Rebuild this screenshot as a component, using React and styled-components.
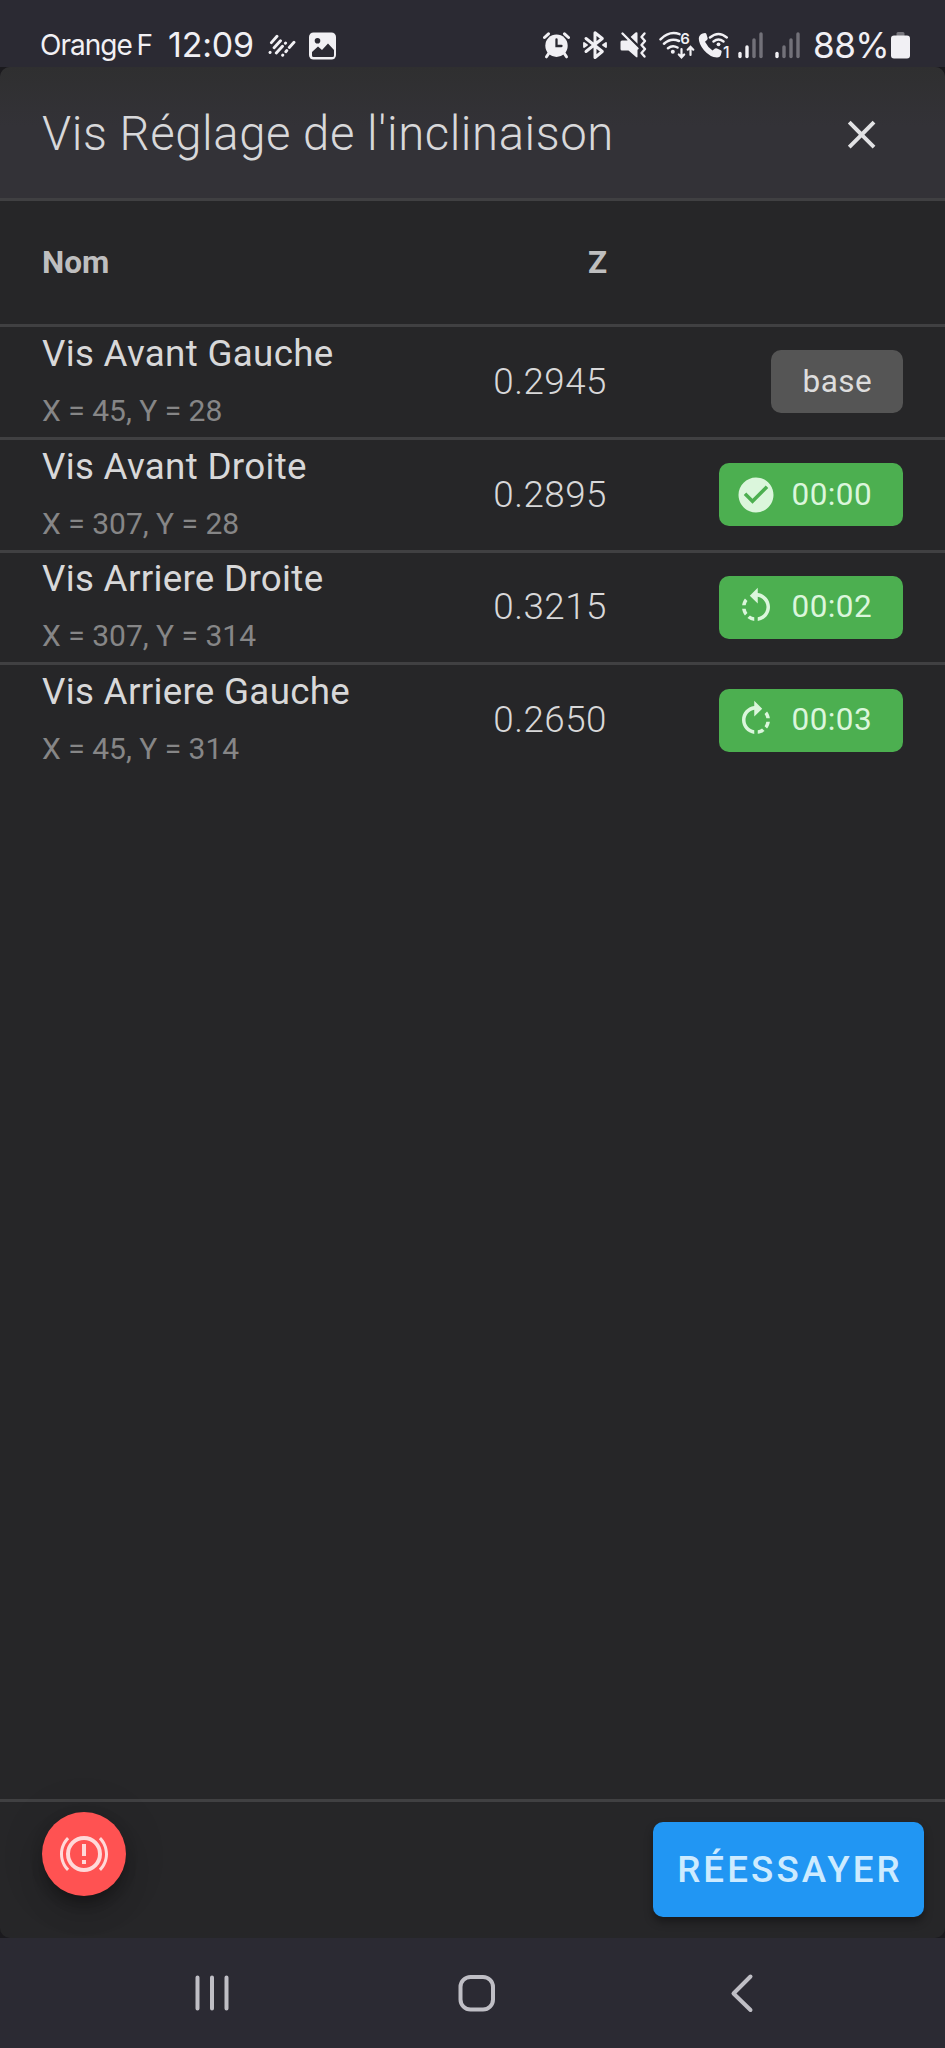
import React from "react";
import styled, { createGlobalStyle } from "styled-components";

const GlobalStyle = createGlobalStyle`
  * {
    box-sizing: border-box;
  }
  body {
    margin: 0;
    background: #2b2a33;
    font-family: Roboto, "Liberation Sans", sans-serif;
  }
`;

const Phone = styled.div`
  display: flex;
  flex-direction: column;
  width: 945px;
  height: 2048px;
  overflow: hidden;
  background: #2b2a33;
`;

const StatusBar = styled.div`
  display: flex;
  align-items: center;
  height: 67px;
  padding: 23px 35px 0 40px;
  color: #f1f0f4;
  font-family: Inter, Roboto, sans-serif;
  flex-shrink: 0;
`;

const Carrier = styled.span`
  width: 128px;
  font-size: 28px;
  line-height: 40px;
  letter-spacing: -1px;
  word-spacing: -2px;
  white-space: nowrap;
`;

const Clock = styled.span`
  width: 100px;
  font-size: 34px;
  line-height: 40px;
  letter-spacing: -0.2px;
  white-space: nowrap;
`;

const StatusIcon = styled.svg`
  display: block;
  flex-shrink: 0;
  height: 30px;
  width: ${(props) => props.$width}px;
  margin-right: ${(props) => props.$gap || 0}px;
`;

const StatusRight = styled.div`
  display: flex;
  align-items: center;
  margin-left: auto;
`;

const Battery = styled.span`
  width: 78px;
  font-size: 35px;
  line-height: 40px;
  letter-spacing: -0.5px;
  white-space: nowrap;
`;

const Frame = styled.div`
  flex-shrink: 0;
  height: 1870.5px;
  background: #1b1a1e;
`;

const Screen = styled.div`
  display: flex;
  flex-direction: column;
  height: 100%;
  border-radius: 10px;
  overflow: hidden;
  background: #262628;
`;

const Header = styled.header`
  display: flex;
  align-items: center;
  justify-content: space-between;
  height: 134px;
  padding: 3px 60px 0 42px;
  border-bottom: 3px solid #404042;
  background: linear-gradient(#2f2f30, #333237 45%);
  flex-shrink: 0;
`;

const Title = styled.h1`
  margin: 0;
  font-size: 47.25px;
  font-weight: 300;
  line-height: 60px;
  letter-spacing: 0.59px;
  color: #d8d8da;
`;

const Icon = styled.svg`
  display: block;
  flex-shrink: 0;
  width: ${(props) => props.$size}px;
  height: ${(props) => props.$size}px;
  fill: currentColor;
`;

const CloseButton = styled.button`
  padding: 1px 0 0;
  border: 0;
  background: none;
  color: #e2e2e4;
`;

const Row = styled.div`
  display: grid;
  grid-template-columns: 400px 165px 1fr;
  align-items: center;
  align-content: center;
  height: ${(props) => (props.$head ? 125.8 : 112.875)}px;
  padding: 0 42px;
  border-bottom: 3px solid ${(props) => (props.$last ? "transparent" : "#404042")};
  flex-shrink: 0;
`;

const ColumnName = styled.span`
  font-size: 31.5px;
  font-weight: 700;
  line-height: 41px;
  color: #bebebf;
  text-align: ${(props) => props.$align || "left"};
`;

const ScrewName = styled.div`
  font-size: 36.75px;
  line-height: 57px;
  letter-spacing: 0.3px;
  color: #d8d8d9;
`;

const ScrewPosition = styled.div`
  font-size: 30px;
  line-height: 57px;
  color: #868687;
`;

const Value = styled.span`
  font-size: 36.75px;
  font-weight: 300;
  line-height: 50px;
  letter-spacing: 0.5px;
  color: #d8d8d9;
  text-align: right;
`;

const Chip = styled.span`
  display: flex;
  align-items: center;
  justify-self: end;
  gap: 15px;
  height: 63px;
  padding: 0 31px 0 ${(props) => (props.$green ? 16 : 32)}px;
  border-radius: 10px;
  background: ${(props) => (props.$green ? "#4caf50" : "#555555")};
  color: ${(props) => (props.$green ? "#dbf6dc" : "#dddddd")};
  font-size: 31.5px;
  line-height: 60px;
  letter-spacing: 0.4px;
`;

const Footer = styled.footer`
  display: flex;
  align-items: flex-start;
  justify-content: space-between;
  height: 138.5px;
  margin-top: auto;
  padding: 10px 21px 0 42px;
  border-top: 3px solid #404042;
  flex-shrink: 0;
`;

const StopButton = styled.button`
  display: flex;
  align-items: center;
  justify-content: center;
  width: 84px;
  height: 84px;
  padding: 0;
  border: 0;
  border-radius: 50%;
  background: #ff5252;
  color: #ffd9d9;
  box-shadow: 0 8px 13px -3px rgba(0, 0, 0, 0.3),
    0 16px 26px rgba(0, 0, 0, 0.16), 0 3px 47px rgba(0, 0, 0, 0.12);
`;

const RetryButton = styled.button`
  width: 271px;
  height: 95px;
  margin-top: 10px;
  padding: 0 0 0 3px;
  border: 0;
  border-radius: 10px;
  background: #2196f3;
  color: #cdebff;
  font-family: inherit;
  font-size: 36.75px;
  font-weight: 500;
  letter-spacing: 3.1px;
  white-space: nowrap;
  box-shadow: 0 5px 8px rgba(0, 0, 0, 0.35);
`;

const NavBar = styled.nav`
  display: grid;
  grid-template-columns: repeat(3, 1fr);
  align-items: center;
  justify-items: center;
  flex: 1;
  padding: 0 71px 0 79px;
`;

const NavIcon = styled.svg`
  display: block;
  width: 40px;
  height: 40px;
  fill: none;
  stroke: #bfbec5;
  stroke-width: 4;
  stroke-linecap: round;
  stroke-linejoin: round;
`;

const icons = {
  close:
    "M19,6.41L17.59,5L12,10.59L6.41,5L5,6.41L10.59,12L5,17.59L6.41,19L12,13.41L17.59,19L19,17.59L13.41,12L19,6.41Z",
  check:
    "M12,2C6.5,2 2,6.5 2,12C2,17.5 6.5,22 12,22C17.5,22 22,17.5 22,12C22,6.5 17.5,2 12,2M10,17L5,12L6.41,10.59L10,14.17L17.59,6.58L19,8L10,17Z",
  left: "M13,4.07V1L8.45,5.55L13,10V6.09C15.84,6.57 18,9.03 18,12C18,14.97 15.84,17.43 13,17.91V19.93C16.95,19.44 20,16.08 20,12C20,7.92 16.95,4.56 13,4.07M7.1,18.32C8.26,19.22 9.61,19.76 11,19.93V17.9C10.13,17.75 9.29,17.41 8.54,16.87L7.1,18.32M6.09,13H4.07C4.24,14.39 4.79,15.73 5.69,16.89L7.1,15.47C6.58,14.72 6.23,13.88 6.09,13M7.11,8.53L5.7,7.11C4.8,8.27 4.24,9.61 4.07,11H6.09C6.23,10.13 6.58,9.28 7.11,8.53Z",
  right:
    "M16.89,15.5L18.31,16.89C19.21,15.73 19.76,14.39 19.93,13H17.91C17.77,13.87 17.43,14.72 16.89,15.5M13,17.9V19.92C14.39,19.75 15.74,19.21 16.9,18.31L15.46,16.87C14.71,17.41 13.87,17.76 13,17.9M19.93,11C19.76,9.61 19.21,8.27 18.31,7.11L16.89,8.53C17.43,9.28 17.77,10.13 17.91,11M15.55,5.55L11,1V4.07C7.06,4.56 4,7.92 4,12C4,16.08 7.05,19.44 11,19.93V17.91C8.16,17.43 6,14.97 6,12C6,9.03 8.16,6.57 11,6.09V10L15.55,5.55Z",
  brake:
    "M11,7H13V13H11V7M11,15H13V17H11V15M12,3A9,9 0 0,0 3,12A9,9 0 0,0 12,21A9,9 0 0,0 21,12A9,9 0 0,0 12,3M12,19A7,7 0 0,1 5,12A7,7 0 0,1 12,5A7,7 0 0,1 19,12A7,7 0 0,1 12,19M20.5,20.5C22.66,18.31 24,15.31 24,12C24,8.69 22.66,5.69 20.5,3.5L19.42,4.58C21.32,6.5 22.5,9.11 22.5,12C22.5,14.9 21.32,17.5 19.42,19.42L20.5,20.5M4.58,19.42C2.68,17.5 1.5,14.9 1.5,12C1.5,9.11 2.68,6.5 4.58,4.58L3.5,3.5C1.34,5.69 0,8.69 0,12C0,15.31 1.34,18.31 3.5,20.5L4.58,19.42Z",
};

const screws = [
  { name: "Vis Avant Gauche", x: 45, y: 28, z: "0.2945", adjust: "base" },
  { name: "Vis Avant Droite", x: 307, y: 28, z: "0.2895", adjust: "00:00", icon: "check" },
  { name: "Vis Arriere Droite", x: 307, y: 314, z: "0.3215", adjust: "00:02", icon: "left" },
  { name: "Vis Arriere Gauche", x: 45, y: 314, z: "0.2650", adjust: "00:03", icon: "right" },
];

const MdiIcon = ({ name, size }) => (
  <Icon $size={size} viewBox="0 0 24 24">
    <path fillRule="evenodd" d={icons[name]} />
  </Icon>
);

const Signal = ({ level, gap }) => (
  <StatusIcon $width={25} $gap={gap} viewBox="0 0 25 30" stroke="#f1f0f4" strokeWidth="3.4" strokeLinecap="round">
    {[23.5, 17, 10, 4].map((top, i) => (
      <path key={top} d={`M${2 + i * 7} ${top}V26.5`} opacity={i < level ? 1 : 0.36} />
    ))}
  </StatusIcon>
);

const Status = () => (
  <StatusBar>
    <Carrier>Orange F</Carrier>
    <Clock>12:09</Clock>
    <StatusIcon $width={28} $gap={13} viewBox="0 0 28 30" fill="none" stroke="#f1f0f4" strokeWidth="2.9" strokeLinecap="round">
      <path d="M3.4 12.6L9 6.3M2 22.5L2.1 22.4M6.1 17.8L12.5 10.8M8.3 23L14.5 16.3M17.4 13.2L17.6 13M14.6 25.3L14.8 25.1M17.8 21.7L18.8 20.6M21.3 17.4L26 12.3" />
    </StatusIcon>
    <StatusIcon $width={27} viewBox="0 0 27 30">
      <rect y="2.5" width="27" height="27" rx="4.5" fill="#f1f0f4" />
      <circle cx="8.5" cy="10.7" r="2.8" fill="#2b2a33" />
      <path d="M3 22L9 16.5L13 20L19 13.5L25 20V25.5Q25 27 23.5 27H4.5Q3 27 3 25.5Z" fill="#2b2a33" />
    </StatusIcon>
    <StatusRight>
      <StatusIcon $width={27} $gap={12} viewBox="0 0 27 30" fill="none" stroke="#f1f0f4" strokeLinecap="round">
        <path d="M1.5 7.5L5.5 3.8M25.5 7.5L21.5 3.8" strokeWidth="3" />
        <path d="M6 23L3.5 26.8M21 23L23.5 26.8" strokeWidth="3" />
        <circle cx="13.5" cy="15.7" r="11.2" fill="#f1f0f4" stroke="none" />
        <path d="M13.5 9.5V16H18.5" stroke="#2b2a33" strokeWidth="2.3" />
      </StatusIcon>
      <StatusIcon $width={26} $gap={12} viewBox="0 0 26 30" fill="none" stroke="#f1f0f4" strokeWidth="3" strokeLinecap="round" strokeLinejoin="round">
        <path d="M4 8.5L20.3 21.5L13 27.5V2.8L20.3 8.5L4 21.5" />
        <path d="M2 13L5 15L2 17ZM24 13L21 15L24 17Z" fill="#f1f0f4" strokeWidth="1.8" />
      </StatusIcon>
      <StatusIcon $width={27} $gap={12} viewBox="0 0 27 30">
        <path d="M0.5 12Q0.5 10.5 2 10.5H7L9 9.5L17.5 18V26.5Q17.5 28 16 27L8.5 20.5H2Q0.5 20.5 0.5 19ZM10.5 7L15.5 2.6Q17.5 1.5 17.5 3.5V14Z" fill="#f1f0f4" />
        <path d="M3.5 3L18 17" stroke="#2b2a33" strokeWidth="1.6" transform="translate(1 -0.6)" />
        <path d="M2.5 3.5L17.5 18.5" stroke="#f1f0f4" strokeWidth="2.4" strokeLinecap="round" />
        <path d="M24.5 3.5L21.5 7L25 11L21.5 15L25 19L21.5 23L24.5 26.5" fill="none" stroke="#f1f0f4" strokeWidth="2.4" strokeLinecap="round" strokeLinejoin="round" />
      </StatusIcon>
      <StatusIcon $width={36} $gap={3} viewBox="0 0 36 30" fill="none" stroke="#f1f0f4" strokeWidth="2.5" strokeLinecap="round">
        <path d="M1.5 9.3Q10.5 0.5 20.5 4.2M5 13.7Q12 7.5 20 11M9 18.2Q13.5 14.5 18.5 17.5" />
        <circle cx="13.8" cy="21.7" r="2" fill="#f1f0f4" stroke="none" />
        <path d="M22.5 19V27M19.8 24.5L22.5 27.3L25.2 24.5M31.5 25V17M28.7 19.7L31.5 16.8L34.3 19.7" strokeWidth="2.2" />
        <text x="21.3" y="13.8" fontSize="15" fontWeight="600" fill="#f1f0f4" stroke="none">6</text>
      </StatusIcon>
      <StatusIcon $width={34} $gap={6} viewBox="0 0 34 30">
        <path d="M4.6 3.6L7 3Q8 3 8.4 4L9.6 8Q10 9.2 9 10L7 11.8Q9.5 17 14.5 20.5L17 18.6Q18 18 19 18.4L22.8 20.2Q24 20.8 23.6 22L23 24.5Q22.3 27.5 19 27.5Q12 27.3 6 20.3Q0.8 14 0.8 8.5Q1 5 4.6 3.6Z" fill="#f1f0f4" />
        <path d="M12 7.5Q20.5 0.5 28.8 7.5M15.5 11.5Q20.5 7.5 25.5 11.5" fill="none" stroke="#f1f0f4" strokeWidth="2.4" strokeLinecap="round" />
        <circle cx="20.5" cy="14.3" r="1.9" fill="#f1f0f4" />
        <text x="25" y="27.5" fontSize="16" fontWeight="500" fill="#f1f0f4">1</text>
      </StatusIcon>
      <Signal level={2} gap={12} />
      <Signal level={1} gap={13} />
      <Battery>88%</Battery>
      <StatusIcon $width={19} viewBox="0 0 19 30">
        <path d="M5.5 6V3.5Q5.5 2 7 2H12Q13.5 2 13.5 3.5V6Z" fill="#77767d" />
        <rect y="5.5" width="19" height="23" rx="3" fill="#f1f0f4" />
      </StatusIcon>
    </StatusRight>
  </StatusBar>
);

const ScrewRow = ({ screw, last }) => (
  <Row $last={last}>
    <div>
      <ScrewName>{screw.name}</ScrewName>
      <ScrewPosition>
        X = {screw.x}, Y = {screw.y}
      </ScrewPosition>
    </div>
    <Value>{screw.z}</Value>
    <Chip $green={Boolean(screw.icon)}>
      {screw.icon && <MdiIcon name={screw.icon} size={42} />}
      <span>{screw.adjust}</span>
    </Chip>
  </Row>
);

const App = () => {
  return (
    <Phone>
      <GlobalStyle />
      <Status />
      <Frame>
        <Screen>
          <Header>
            <Title>Vis Réglage de l'inclinaison</Title>
            <CloseButton aria-label="Fermer">
              <MdiIcon name="close" size={47.25} />
            </CloseButton>
          </Header>
          <Row $head>
            <ColumnName>Nom</ColumnName>
            <ColumnName $align="right">Z</ColumnName>
          </Row>
          {screws.map((screw, i) => (
            <ScrewRow key={screw.name} screw={screw} last={i === screws.length - 1} />
          ))}
          <Footer>
            <StopButton aria-label="Arrêt d'urgence">
              <MdiIcon name="brake" size={48} />
            </StopButton>
            <RetryButton>RÉESSAYER</RetryButton>
          </Footer>
        </Screen>
      </Frame>
      <NavBar>
        <NavIcon viewBox="0 0 40 40">
          <path d="M5.5 4.5V35.5M20 4.5V35.5M34.5 4.5V35.5" />
        </NavIcon>
        <NavIcon viewBox="0 0 40 40">
          <rect x="3.5" y="4" width="32.5" height="32.5" rx="10" />
        </NavIcon>
        <NavIcon viewBox="0 0 40 40">
          <path d="M28.5 3.5L11.5 20.5L28.5 37" />
        </NavIcon>
      </NavBar>
    </Phone>
  );
};

export default App;
